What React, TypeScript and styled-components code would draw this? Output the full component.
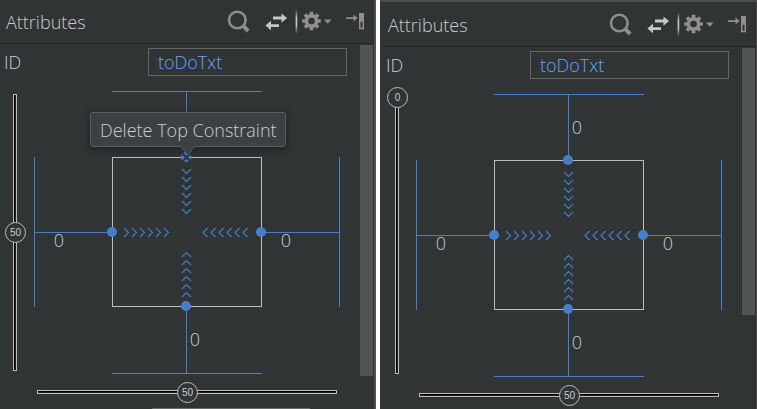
import React, { useState } from "react";
import styled, { createGlobalStyle } from "styled-components";

const BG = "#303434";
const BLUE = "#467fc9";
const TEXT = "#cccccc";
const FRAME = "#bdbdbd";

const GlobalStyle = createGlobalStyle`
  * { box-sizing: border-box; }
  body {
    margin: 0;
    background: #ffffff;
    font-family: "Open Sans", "Noto Sans", sans-serif;
    font-size: 18px;
    font-weight: 300;
    line-height: 24px;
    color: ${TEXT};
  }
  button, input, select { font: inherit; color: inherit; }
`;

const Workspace = styled.main`
  display: grid;
  grid-template-columns: 376fr 377fr;
  gap: 4px;
  height: 100vh;
  overflow: hidden;
`;

const Panel = styled.section<{ $docked: boolean }>`
  display: flex;
  flex-direction: column;
  min-width: 0;
  min-height: 0;
  overflow: hidden;
  background: ${BG};
  border-right: ${(p) => (p.$docked ? "1px solid #454747" : "2px solid #54514f")};
  padding-left: ${(p) => (p.$docked ? "2px" : "0")};
  border-top: ${(p) => (p.$docked ? "2px solid #4a4c4d" : "none")};
  padding-top: ${(p) => (p.$docked ? "1px" : "0")};
`;

const Header = styled.header`
  display: flex;
  align-items: center;
  flex: none;
  padding: 9px 9px 9px 6px;
  border-bottom: 1px solid #262829;
`;

const Title = styled.h2`
  flex: 1;
  margin: 0;
  font-size: 18px;
  line-height: 24px;
  font-weight: 300;
`;

const ToolButton = styled.button`
  display: block;
  flex: none;
  padding: 0;
  border: 0;
  background: none;
  cursor: pointer;
  svg { display: block; }
`;

const Separator = styled.span`
  flex: none;
  width: 3px;
  height: 25px;
  background: linear-gradient(90deg, #6c6e6e 0 1px, #c4c4c4 1px 2px, #5a5c5c 2px 3px);
  mask-image: linear-gradient(transparent, #000 35%, #000 65%, transparent);
`;

const Body = styled.div`
  display: flex;
  flex: 1;
  min-height: 0;
  padding: 1px 1px 0 0;
`;

const Content = styled.div`
  flex: 1;
  min-width: 0;
  overflow: hidden;
  padding-top: 3px;
`;

const ScrollTrack = styled.div`
  flex: none;
  width: 13px;
`;

const ScrollThumb = styled.div<{ $size: number }>`
  height: ${(p) => p.$size}%;
  background: #515556;
`;

const FieldRow = styled.div`
  display: grid;
  grid-template-columns: 144px 1fr;
  align-items: center;
  padding: 0 13px 0 4px;
`;

const TextField = styled.input`
  width: 100%;
  height: 28px;
  padding: 0 9px 0 9px;
  border: 1px solid #646464;
  background: ${BG};
  color: #60a6ff;
  outline: none;
`;

const Inspector = styled.div`
  display: grid;
  grid-template-columns: 34px 1fr;
  row-gap: 16px;
  padding-top: 15px;
`;

const DiagramArea = styled.div`
  position: relative;
  width: 306px;
  svg { display: block; }
`;

const VerticalSlot = styled.div`
  padding: 3px 0 3px 13px;
`;

const HorizontalSlot = styled.div`
  grid-column: 2;
  padding: 0 23px 0 3px;
`;

const Track = styled.div<{ $vertical: boolean }>`
  position: relative;
  border: 1px solid ${FRAME};
  background: linear-gradient(${(p) => (p.$vertical ? "90deg" : "180deg")}, #000 50%, #202222 50%);
  width: ${(p) => (p.$vertical ? "4px" : "100%")};
  height: ${(p) => (p.$vertical ? "100%" : "4px")};
`;

const Range = styled.input<{ $vertical: boolean }>`
  position: absolute;
  margin: 0;
  appearance: none;
  background: transparent;
  cursor: pointer;
  outline: none;
  ${(p) =>
    p.$vertical
      ? "writing-mode: vertical-lr; width: 21px; height: calc(100% + 21px); top: -11px; left: -9px;"
      : "height: 21px; width: calc(100% + 21px); left: -10px; top: -9px;"}
  &::-webkit-slider-thumb {
    appearance: none;
    width: 21px;
    height: 21px;
    border: 1px solid ${FRAME};
    border-radius: 50%;
    background: ${BG};
  }
`;

const RangeValue = styled.output<{ $vertical: boolean }>`
  position: absolute;
  width: 21px;
  height: 21px;
  font: 10px/21px "Liberation Sans", sans-serif;
  text-align: center;
  pointer-events: none;
  ${(p) => (p.$vertical ? "left: -9px; margin-top: -11px;" : "top: -9px; margin-left: -10px;")}
`;

const Tooltip = styled.div`
  position: absolute;
  top: 21px;
  left: 56px;
  padding: 5px 8px 4px 9px;
  border: 1px solid #5b5e60;
  border-radius: 3px;
  background: #3c4043;
  white-space: nowrap;
  box-shadow: 0 2px 8px rgba(0, 0, 0, 0.4);
  svg {
    position: absolute;
    top: 100%;
    left: 89px;
    margin-top: -1px;
  }
`;

const NextRow = styled.div`
  padding: 14px 49px 0 151px;
`;

const NextField = styled.select`
  display: block;
  width: 100%;
  height: 28px;
  border: 1px solid #6a6a6a;
  border-radius: 2px;
  background: #45494a;
`;

function Slider({ label, initial, vertical = false }: { label: string; initial: number; vertical?: boolean }) {
  const [value, setValue] = useState(initial);
  const offset = `${value}%`;
  return (
    <Track $vertical={vertical}>
      <Range
        type="range"
        min={0}
        max={100}
        aria-label={label}
        $vertical={vertical}
        value={value}
        onChange={(e) => setValue(Number(e.target.value))}
      />
      <RangeValue $vertical={vertical} style={vertical ? { top: offset } : { left: offset }}>
        {value}
      </RangeValue>
    </Track>
  );
}

const STEPS = [0, 1, 2, 3, 4, 5];

function Chevrons() {
  return (
    <g fill="none" stroke={BLUE} strokeWidth="1.1">
      {STEPS.map((i) => {
        const s = i * 8;
        return (
          <g key={i}>
            <path d={`M${90 + s} 137l4.5 4.5l-4.5 4.5`} />
            <path d={`M${173.5 + s} 137l-4.5 4.5l4.5 4.5`} />
            <path d={`M148 ${78 + s}l4.5 4.5l4.5 -4.5`} />
            <path d={`M148 ${166 + s}l4.5 -4.5l4.5 4.5`} />
          </g>
        );
      })}
    </g>
  );
}

function ConstraintDiagram({ deleting }: { deleting: boolean }) {
  return (
    <svg width="306" height="283" viewBox="0 0 306 283" role="img" aria-label="Constraint widget">
      <g stroke={BLUE} fill="none">
        <path d="M78 .5H228M78 282.5H228M.5 66V216M305.5 66V216" />
        <path d="M152.5 1V66M152.5 216V282M1 141.5H78M228 141.5H305" />
      </g>
      <rect x="78.5" y="66.5" width="149" height="149" fill="none" stroke={FRAME} />
      <Chevrons />
      <g fill={BLUE}>
        <circle cx="152" cy="66" r="5" />
        <circle cx="78" cy="141" r="5" />
        <circle cx="227" cy="141" r="5" />
        <circle cx="152" cy="215" r="5" />
      </g>
      {deleting && <path d="M147.5 61.5l10 10M157.5 61.5l-10 10" stroke={BG} strokeWidth="2" />}
      <g fill={TEXT} textAnchor="middle" fontSize="18">
        {!deleting && <text x="161" y="40">0</text>}
        <text x="25" y="156">0</text>
        <text x="252" y="156">0</text>
        <text x="161" y="255">0</text>
      </g>
    </svg>
  );
}

function SearchIcon() {
  return (
    <svg width="38" height="25" fill="none" stroke="#8d8d8d">
      <circle cx="11.3" cy="11" r="8.3" strokeWidth="2.6" />
      <path d="M17 16.7L22.2 22" strokeWidth="4" />
    </svg>
  );
}

function SwapIcon() {
  return (
    <svg width="31" height="25" fill="#c6c6c6">
      <path d="M9 7.6h8.5V4.4l5.6 4.7L17.5 13.8v-3.4H9z" />
      <path d="M15 15.2H7v-3.4L1.4 16.5L7 21.3v-3.3h8z" />
    </svg>
  );
}

function GearIcon() {
  return (
    <svg width="47" height="25" fill="#8f8f8f">
      <circle cx="13.5" cy="12" r="5.1" fill="none" stroke="#8f8f8f" strokeWidth="3.6" />
      {[0, 45, 90, 135].map((a) => (
        <path key={a} transform={`rotate(${a} 13.5 12)`} d="M11.7 2.7h3.6v4h-3.6zM11.7 17.3h3.6v4h-3.6z" />
      ))}
      <path d="M26 10.5h7.5l-3.75 4.2z" />
    </svg>
  );
}

function HideIcon() {
  return (
    <svg width="20" height="25" fill="#8f8f8f">
      <path d="M1 8.3h7.6V5.6l4 3.5-4 3.5V9.9H1z" />
      <path d="M14 4h5v16.3h-5z" />
      <path d="M15.5 12.7h2v6h-2z" fill={BG} />
    </svg>
  );
}

interface AttributesProps {
  name: string;
  verticalBias: number;
  scrollSize: number;
  docked?: boolean;
  tooltip?: string;
}

function AttributesPanel({ name, verticalBias, scrollSize, docked = false, tooltip }: AttributesProps) {
  const id = `${name}-id`;
  return (
    <Panel $docked={docked}>
      <Header>
        <Title>Attributes</Title>
        <ToolButton aria-label="Search"><SearchIcon /></ToolButton>
        <ToolButton aria-label="View all attributes"><SwapIcon /></ToolButton>
        <Separator />
        <ToolButton aria-label="Settings"><GearIcon /></ToolButton>
        <ToolButton aria-label="Hide"><HideIcon /></ToolButton>
      </Header>
      <Body>
        <Content>
          <FieldRow>
            <label htmlFor={id}>ID</label>
            <TextField id={id} defaultValue="toDoTxt" spellCheck={false} />
          </FieldRow>
          <Inspector>
            <VerticalSlot>
              <Slider vertical label="Vertical bias" initial={verticalBias} />
            </VerticalSlot>
            <DiagramArea>
              <ConstraintDiagram deleting={Boolean(tooltip)} />
              {tooltip && (
                <Tooltip role="tooltip">
                  {tooltip}
                  <svg width="16" height="12">
                    <path d="M0 0L.5 1L7.5 10L14.5 1L15 0z" fill="#3c4043" />
                    <path d="M0 .5L7.5 10L15 .5" fill="none" stroke="#5b5e60" />
                    <path d="M1 0h13v1H1z" fill="#3c4043" />
                  </svg>
                </Tooltip>
              )}
            </DiagramArea>
            <HorizontalSlot>
              <Slider label="Horizontal bias" initial={50} />
            </HorizontalSlot>
          </Inspector>
          <NextRow>
            <NextField aria-label="layout_width" />
          </NextRow>
        </Content>
        <ScrollTrack>
          <ScrollThumb $size={scrollSize} />
        </ScrollTrack>
      </Body>
    </Panel>
  );
}

export default function App() {
  return (
    <>
      <GlobalStyle />
      <Workspace>
        <AttributesPanel name="first" verticalBias={50} scrollSize={91} tooltip="Delete Top Constraint" />
        <AttributesPanel name="second" verticalBias={0} scrollSize={74} docked />
      </Workspace>
    </>
  );
}
